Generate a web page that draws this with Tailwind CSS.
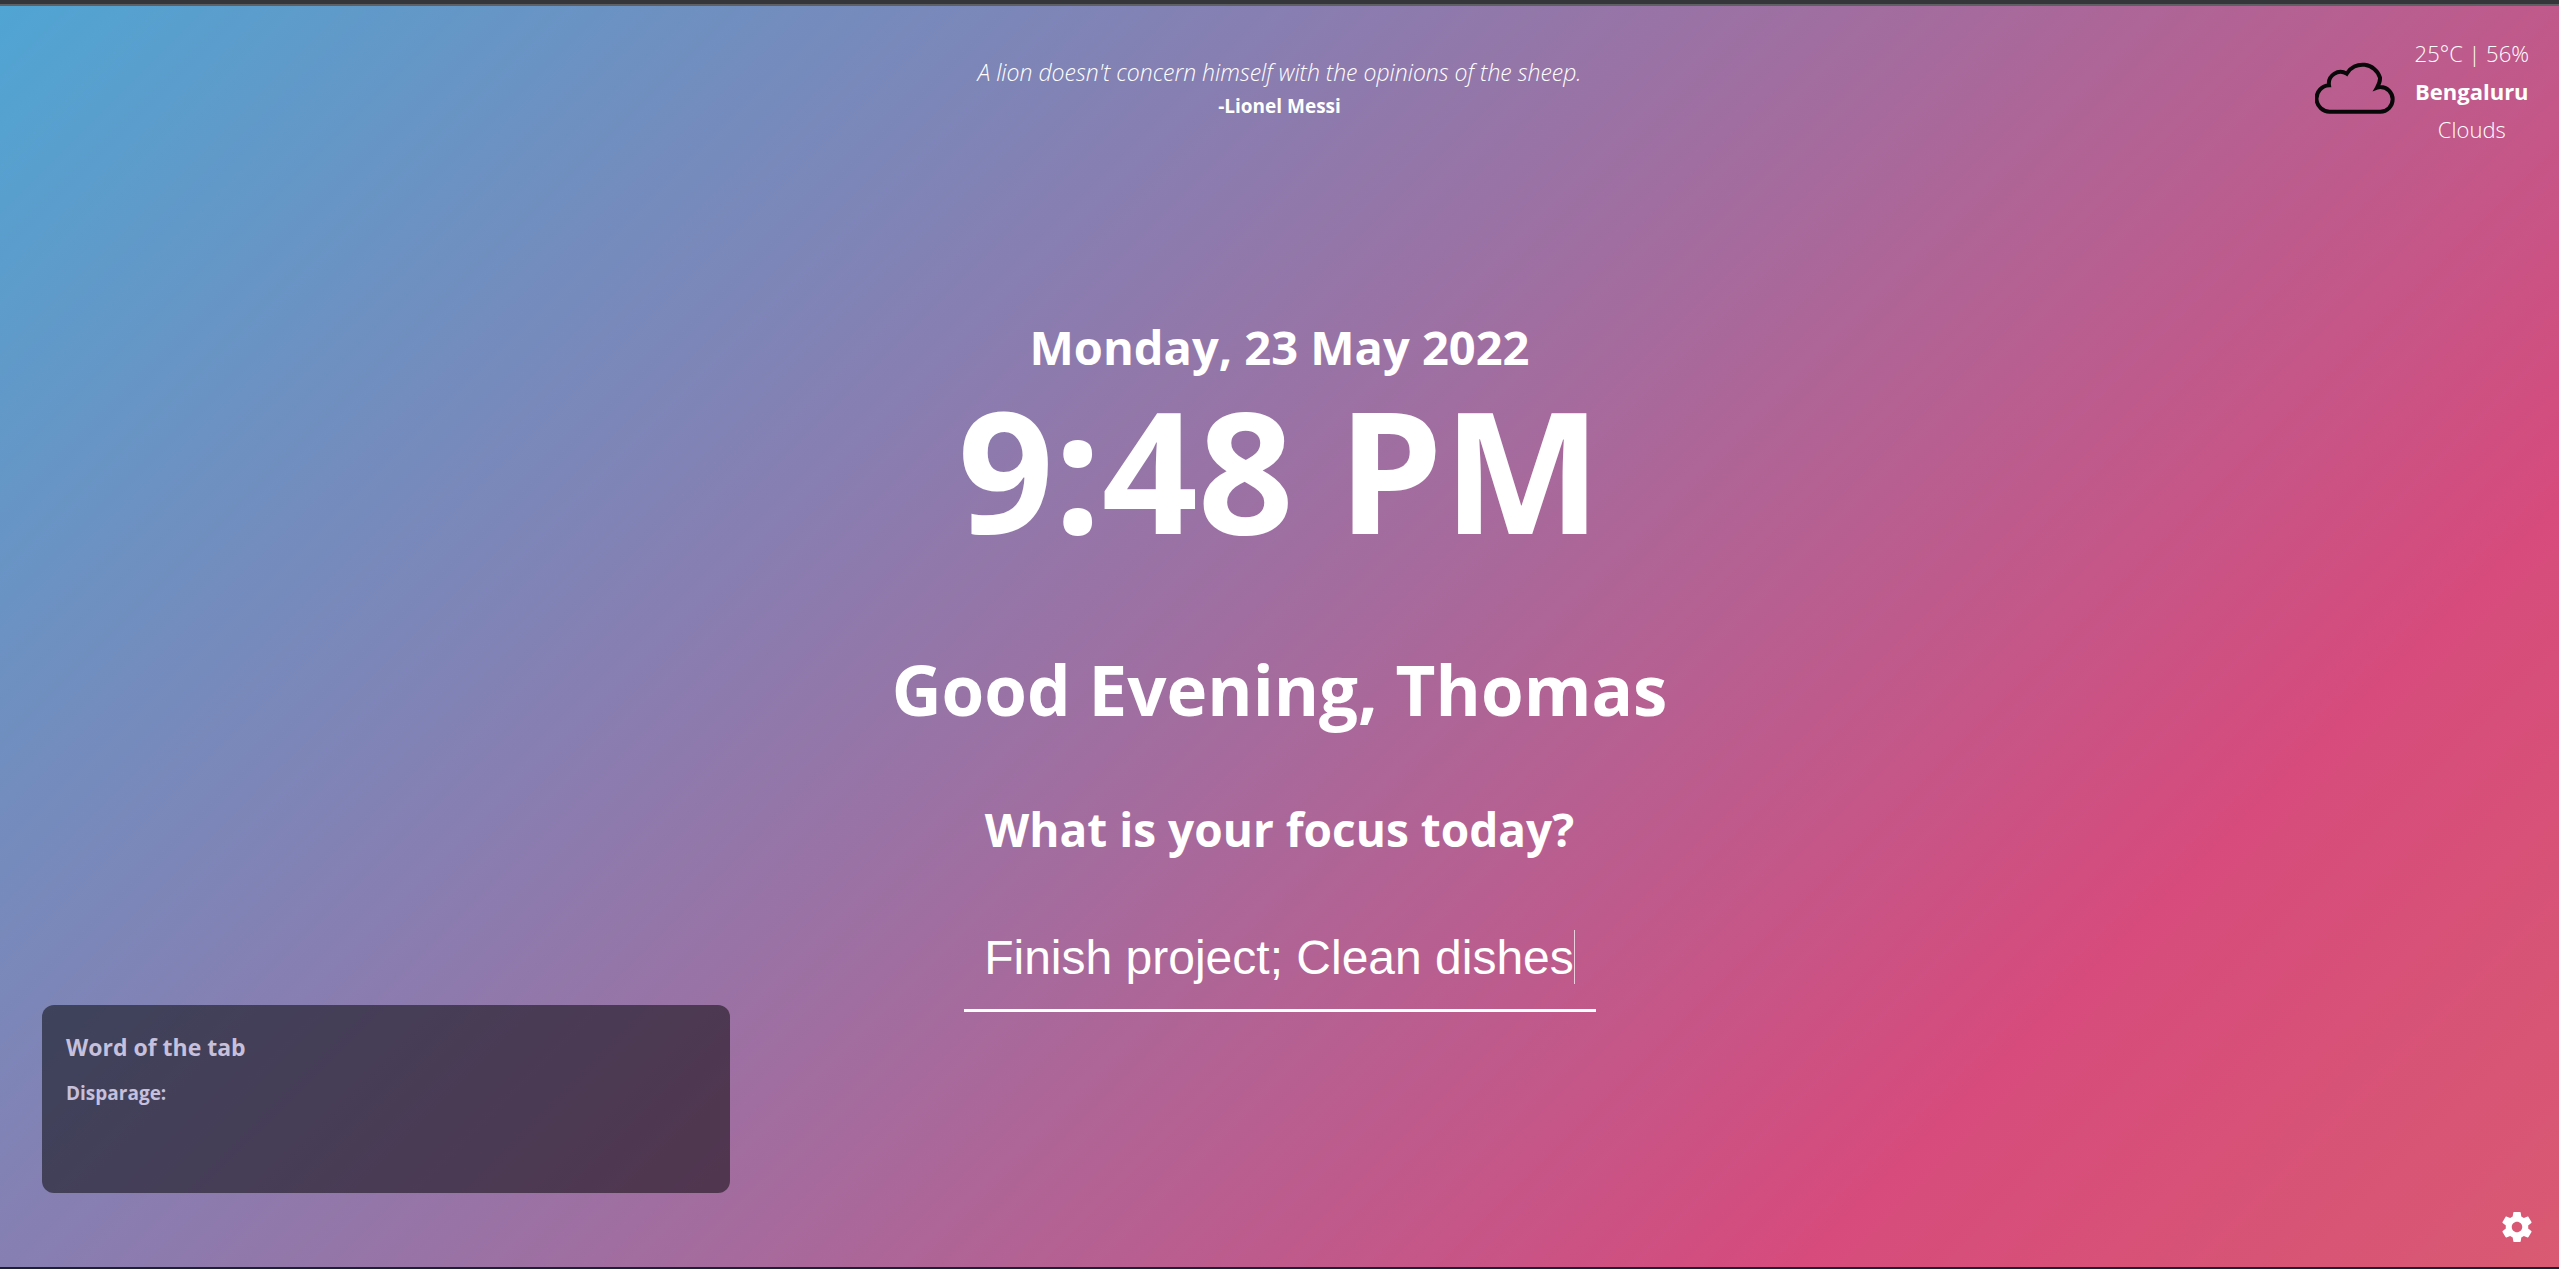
<!DOCTYPE html>
<html lang="en">
<head>
<meta charset="utf-8">
<title>New Tab</title>
<script src="https://cdn.jsdelivr.net/npm/@tailwindcss/browser@4"></script>
</head>
<body class="flex min-h-screen flex-col border-t-4 border-b-2 border-t-[#35363a] border-b-[#1d1f33] font-['Open_Sans','Noto_Sans',sans-serif] text-white">
<div class="grid flex-1 border-t-2 border-[#5f6064] bg-[linear-gradient(135deg,#50a5d3_0%,#887eb1_34%,#d64b7c_80%,#d95a72_100%)]">

  <header class="col-start-1 row-start-1 grid grid-cols-3 self-start px-[30px] pt-7">
    <figure class="col-start-2 pt-5 text-center">
      <blockquote class="text-[23px]/9 font-light italic">A lion doesn't concern himself with the opinions of the sheep.</blockquote>
      <figcaption class="text-[19px]/8 font-bold">-Lionel Messi</figcaption>
    </figure>
    <section class="flex items-center justify-end gap-5" aria-label="Weather">
      <svg class="mb-1.5 h-14 w-20" viewBox="76 182 240 168" fill="none" stroke="#080808" stroke-width="12" aria-hidden="true">
        <path d="M122 337H272A37 37 0 0 0 272 263Q267 263 262 265Q272 247 271 235A55 55 0 0 0 171 223A35 35 0 0 0 118 258A39 39 0 0 0 122 337Z"/>
      </svg>
      <div class="text-center text-[22px]/[38px] font-light">
        <p>25°C | 56%</p>
        <p class="font-bold">Bengaluru</p>
        <p>Clouds</p>
      </div>
    </section>
  </header>

  <main class="col-start-1 row-start-1 flex flex-col items-center self-start pt-[306px] font-bold">
    <p class="text-[47px]/[70px]">Monday, 23 May 2022</p>
    <time class="text-[168px]/[174px]" datetime="2022-05-23T21:48">9:48 PM</time>
    <h1 class="mt-22 text-[69px]/[90px]">Good Evening, Thomas</h1>
    <label for="focus" class="mt-15 text-[46px]/[70px]">What is your focus today?</label>
    <div class="mt-15 flex h-[88px] w-[632px] items-start justify-center border-b-3 border-white">
      <input id="focus" type="text" value="Finish project; Clean dishes" class="h-[66px] bg-transparent font-['Liberation_Sans',sans-serif] text-5xl font-normal caret-transparent outline-none [field-sizing:content]">
      <span class="mt-1.5 h-[54px] w-px bg-white/70"></span>
    </div>
  </main>

  <footer class="col-start-1 row-start-1 flex items-end justify-between self-end pr-6 pb-[22px] pl-[42px]">
    <section class="mb-[52px] h-[188px] w-[688px] rounded-xl bg-black/50 px-6 py-6 font-bold text-[#c6c0dc]">
      <h2 class="text-[23px]/9">Word of the tab</h2>
      <p class="mt-2.5 text-[19px]/9">Disparage:</p>
    </section>
    <button type="button" class="size-9" aria-label="Settings">
      <svg class="size-9" viewBox="0 0 24 24" fill="currentColor" aria-hidden="true"><path d="M19.43 12.98c.04-.32.07-.64.07-.98s-.03-.66-.07-.98l2.11-1.65c.19-.15.24-.42.12-.64l-2-3.46c-.12-.22-.39-.3-.61-.22l-2.49 1c-.52-.4-1.08-.73-1.69-.98l-.38-2.65C14.46 2.18 14.25 2 14 2h-4c-.25 0-.46.18-.49.42l-.38 2.65c-.61.25-1.17.59-1.69.98l-2.49-1c-.23-.09-.49 0-.61.22l-2 3.46c-.13.22-.07.49.12.64l2.11 1.65c-.04.32-.07.65-.07.98s.03.66.07.98l-2.11 1.65c-.19.15-.24.42-.12.64l2 3.46c.12.22.39.3.61.22l2.49-1c.52.4 1.08.73 1.69.98l.38 2.65c.03.24.24.42.49.42h4c.25 0 .46-.18.49-.42l.38-2.65c.61-.25 1.17-.59 1.69-.98l2.49 1c.23.09.49 0 .61-.22l2-3.46c.12-.22.07-.49-.12-.64l-2.11-1.65zM12 15.5c-1.93 0-3.5-1.57-3.5-3.5s1.57-3.5 3.5-3.5 3.5 1.57 3.5 3.5-1.57 3.5-3.5 3.5z"/></svg>
    </button>
  </footer>
</div>
</body>
</html>
